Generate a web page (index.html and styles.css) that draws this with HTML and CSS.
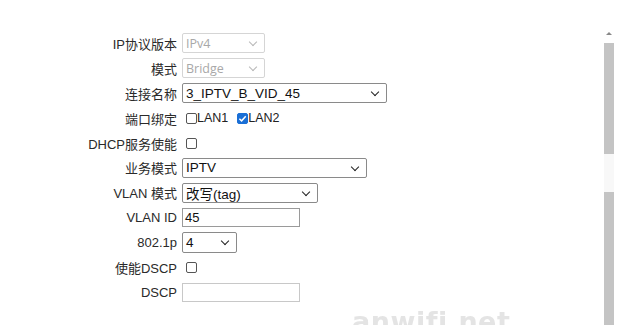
FILE: index.html
```html
<!DOCTYPE html>
<html lang="zh">
<head>
<meta charset="utf-8">
<link rel="stylesheet" href="styles.css">
</head>
<body>
<div class="page">
  <div class="form">
    <div class="row"><span class="lbl">IP协议版本</span><span class="sel dis w83">IPv4<i class="chev"></i></span></div>
    <div class="row"><span class="lbl">模式</span><span class="sel dis w83">Bridge<i class="chev"></i></span></div>
    <div class="row"><span class="lbl">连接名称</span><span class="sel w205">3_IPTV_B_VID_45<i class="chev"></i></span></div>
    <div class="row"><span class="lbl">端口绑定</span><span class="cb"></span><span class="cbt">LAN1</span><span class="cb on"><svg viewBox="0 0 10 10" width="9" height="9"><path d="M1.5 5.2 L4 7.6 L8.6 2.4" fill="none" stroke="#fff" stroke-width="1.6"/></svg></span><span class="cbt">LAN2</span></div>
    <div class="row"><span class="lbl">DHCP服务使能</span><span class="cb"></span></div>
    <div class="row"><span class="lbl">业务模式</span><span class="sel w185">IPTV<i class="chev"></i></span></div>
    <div class="row"><span class="lbl">VLAN 模式</span><span class="sel w136">改写(tag)<i class="chev"></i></span></div>
    <div class="row"><span class="lbl">VLAN ID</span><span class="inp">45</span></div>
    <div class="row"><span class="lbl">802.1p</span><span class="sel w54">4<i class="chev"></i></span></div>
    <div class="row"><span class="lbl">使能DSCP</span><span class="cb"></span></div>
    <div class="row"><span class="lbl">DSCP</span><span class="inp empty"></span></div>
    <div class="mark">anwifi.net</div>
  </div>
  <div class="sbar">
    <div class="arrow"></div>
    <div class="thumb t1"></div>
    <div class="gap"></div>
    <div class="thumb t2"></div>
  </div>
</div>
</body>
</html>
```
FILE: styles.css
```css
html, body { margin: 0; padding: 0; background: #fff; }
body {
  width: 617px; height: 325px; overflow: hidden;
  font-family: "Liberation Sans", "Noto Sans CJK SC", sans-serif;
  font-size: 13px; color: #222;
}
.page { display: flex; height: 325px; }
.form { flex: 1; padding-top: 31px; display: flex; flex-direction: column; overflow: hidden; }
.row { display: flex; align-items: center; height: 24.9px; flex-shrink: 0; }
.lbl { width: 182px; text-align: right; padding-right: 5px; box-sizing: border-box; color: #2a2a2a; white-space: nowrap; }
.sel {
  position: relative; box-sizing: border-box; height: 20px;
  border: 1px solid #8a8a8a; border-radius: 2px; padding-left: 3px;
  display: flex; align-items: center; font-size: 13.5px; color: #111;
}
.sel.dis { border-color: #d5d5d5; color: #a8a8a8; font-family: "Open Sans", "Noto Sans", sans-serif; font-size: 12.5px; }
.chev {
  position: absolute; right: 8px; top: 5px; width: 5px; height: 5px;
  border-right: 1.6px solid #222; border-bottom: 1.6px solid #222; transform: rotate(45deg);
}
.dis .chev { border-color: #b8b8b8; }
.w83 { width: 83px; }
.w205 { width: 205px; }
.w185 { width: 185px; }
.w136 { width: 136px; }
.w54 { width: 55px; height: 21px; }
.inp { box-sizing: border-box; width: 118px; height: 19px; border: 1px solid #9a9a9a; padding-left: 2px; display: flex; align-items: center; color: #111; }
.inp.empty { border-color: #c8c8c8; }
.cb { box-sizing: border-box; width: 11px; height: 11px; border: 1px solid #555; border-radius: 2px; margin-left: 4px; display: flex; align-items: center; justify-content: center; }
.cb.on { background: #1a6fd6; border-color: #1a6fd6; margin-left: 9px; }
.cbt { margin-left: 0; color: #222; font-size: 12.5px; }
.mark {
  flex-shrink: 0;
  margin-left: 352px; margin-top: 2px; font-size: 27px; font-weight: bold; line-height: 30px;
  color: #e4e4e4; font-family: "DejaVu Sans", sans-serif; letter-spacing: 0.5px;
  filter: blur(0.6px);
}
.sbar { width: 12px; margin-right: 2px; padding-top: 32px; display: flex; flex-direction: column; align-items: center; }
.arrow { width: 0; height: 0; border-left: 3px solid transparent; border-right: 3px solid transparent; border-bottom: 3px solid #888; margin-bottom: 8px; }
.thumb { width: 10px; background: #c4c4c4; }
.t1 { height: 111px; }
.gap { height: 38px; width: 10px; background: #f8f8f8; }
.t2 { flex: 1; }
```
